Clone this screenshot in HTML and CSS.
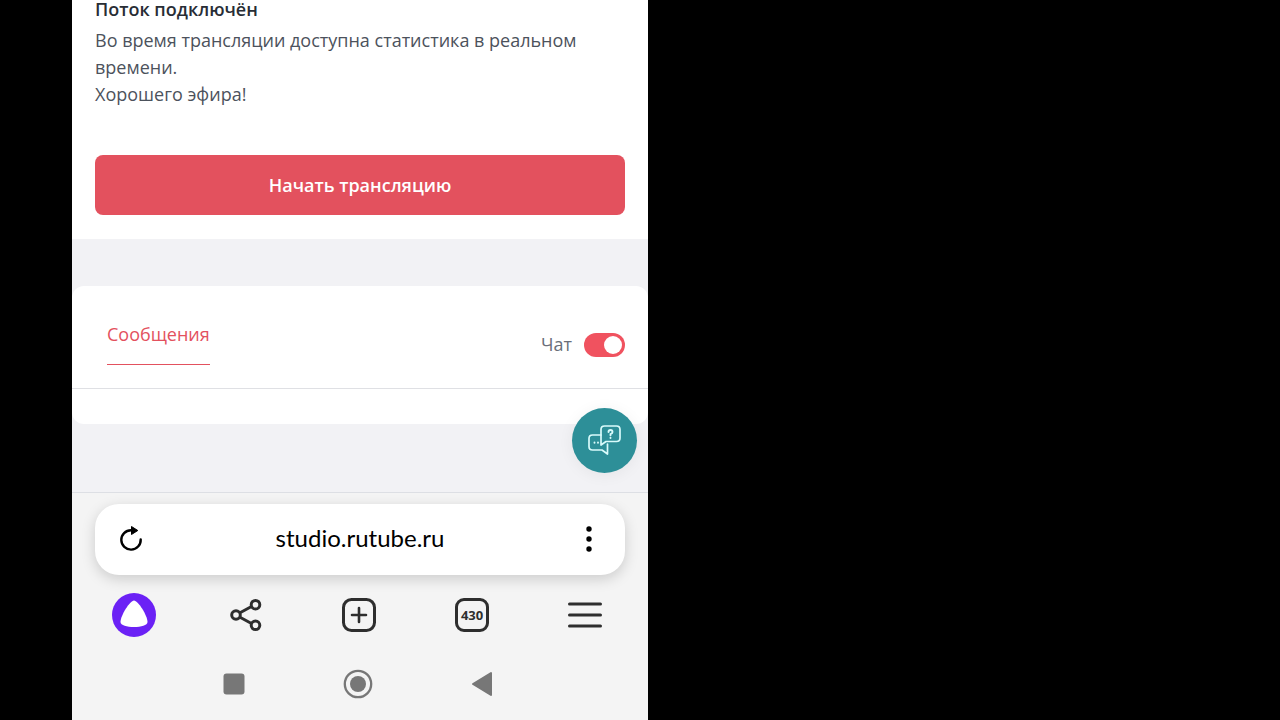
FILE: index.html
```html
<!DOCTYPE html>
<html lang="ru">
<head>
  <meta charset="UTF-8">
  <meta name="viewport" content="width=device-width, initial-scale=1.0">
  <title>Трансляция</title>
  <link rel="stylesheet" href="styles.css">
</head>
<body>
  <div class="phone">
    <main class="page">
      <section class="stream-card">
        <h1 class="stream-title">Поток подключён</h1>
        <p class="stream-text">Во время трансляции доступна статистика в реальном времени.<br>Хорошего эфира!</p>
        <button class="start-button" type="button">Начать трансляцию</button>
      </section>

      <section class="chat-card">
        <div class="chat-header">
          <a class="chat-tab" href="#messages">Сообщения</a>
          <label class="chat-toggle">
            Чат
            <input class="switch" type="checkbox" checked>
          </label>
        </div>
        <div class="chat-body" id="messages"></div>
      </section>

      <button class="help-button" type="button" aria-label="Помощь">
        <svg width="34" height="32" viewBox="0 0 34 32" fill="none" stroke="#d9fbfb" stroke-width="1.7" stroke-linejoin="round" stroke-linecap="round">
          <path d="M13 10H4.500Q1 10 1 13.500V21.500Q1 25 4.500 25H14L19.500 29V19"/>
          <path d="M16.500 1H28.500Q32 1 32 4.500V13Q32 16.500 28.500 16.500H18L13 20V4.500Q13 1 16.500 1Z"/>
          <path d="M20.500 7Q20.500 5 22.500 5Q24.500 5 24.500 7Q24.500 8.200 22.500 9.200V10.200M22.500 12.800V13" stroke-width="1.900"/>
          <path d="M6.500 17.500V17.700M10 17.500V17.700" stroke-width="1.900"/>
        </svg>
      </button>
    </main>

    <footer class="browser">
      <div class="address-bar">
        <button class="icon-button" type="button" aria-label="Обновить">
          <svg width="28" height="30" viewBox="0 0 28 30">
            <path d="M14 5.200A9.700 9.700 0 1 0 23.700 14.500" fill="none" stroke="#000" stroke-width="2.400" stroke-linecap="round"/>
            <path d="M14.500 1.500L20.800 5.500L14.500 9.500Z" fill="#000" stroke="#000" stroke-linejoin="round"/>
          </svg>
        </button>
        <a class="address" href="#">studio.rutube.ru</a>
        <button class="icon-button" type="button" aria-label="Меню страницы">
          <svg width="28" height="30" viewBox="0 0 28 30" fill="#000">
            <circle cx="14" cy="4" r="2.700"/>
            <circle cx="14" cy="14" r="2.700"/>
            <circle cx="14" cy="24" r="2.700"/>
          </svg>
        </button>
      </div>

      <nav class="tool-row">
        <button class="icon-button" type="button" aria-label="Алиса">
          <svg width="44" height="44" viewBox="0 0 44 44">
            <circle cx="22" cy="22" r="22" fill="#6b21f5"/>
            <path d="M22 7.500C26 7.500 35.500 22.500 35.500 29C35.500 32.500 29 34 22 34S8.500 32.500 8.500 29C8.500 22.500 18 7.500 22 7.500Z" fill="#fff"/>
          </svg>
        </button>
        <button class="icon-button" type="button" aria-label="Поделиться">
          <svg width="34" height="36" viewBox="0 0 34 36" fill="none" stroke="#2e2e2e" stroke-width="3">
            <path d="M10 15.800L21.500 9.500M10 20.200L21.500 26.500"/>
            <circle cx="6" cy="18" r="4.300"/>
            <circle cx="25.500" cy="7.700" r="4.300"/>
            <circle cx="25.500" cy="28.300" r="4.300"/>
          </svg>
        </button>
        <button class="icon-button" type="button" aria-label="Новая вкладка">
          <svg width="34" height="34" viewBox="0 0 34 34" fill="none" stroke="#2e2e2e" stroke-width="3" stroke-linecap="round">
            <rect x="1.500" y="1.500" width="31" height="31" rx="8"/>
            <path d="M17 10V24M10 17H24" stroke-width="2.600"/>
          </svg>
        </button>
        <button class="tabs-button" type="button">430</button>
        <button class="icon-button" type="button" aria-label="Меню">
          <svg width="36" height="28" viewBox="0 0 36 28" stroke="#2e2e2e" stroke-width="3" stroke-linecap="round">
            <path d="M2.500 3H33.500M2.500 14H33.500M2.500 25H33.500"/>
          </svg>
        </button>
      </nav>

      <nav class="system-row">
        <button class="icon-button" type="button" aria-label="Недавние">
          <svg width="22" height="22" viewBox="0 0 22 22">
            <rect x="0.500" y="0.500" width="21" height="21" rx="3" fill="#777"/>
          </svg>
        </button>
        <button class="icon-button" type="button" aria-label="Домой">
          <svg width="30" height="30" viewBox="0 0 30 30">
            <circle cx="15" cy="15" r="13.200" fill="none" stroke="#777" stroke-width="2.300"/>
            <circle cx="15" cy="15" r="8" fill="#777"/>
          </svg>
        </button>
        <button class="icon-button" type="button" aria-label="Назад">
          <svg width="22" height="26" viewBox="0 0 22 26">
            <path d="M2 13L20 2V24Z" fill="#777" stroke="#777" stroke-width="2" stroke-linejoin="round"/>
          </svg>
        </button>
      </nav>
    </footer>
  </div>
</body>
</html>
```

FILE: styles.css
```css
* {
  box-sizing: border-box;
}

body {
  margin: 0;
  background-color: #000;
  font-family: "Open Sans", "Noto Sans", sans-serif;
  font-size: 18px;
}

button {
  border: none;
  padding: 0;
  font-family: inherit;
  cursor: pointer;
}

.phone {
  display: flex;
  flex-direction: column;
  width: 45%;
  min-height: 100vh;
  margin-left: 72px;
  background-color: #f2f2f5;
}

/* Page content */
.page {
  position: relative;
  flex: 1;
}

.stream-card {
  padding: 0 23px 24px;
  background-color: #fff;
}

.stream-title {
  margin: 0;
  font-size: 18px;
  font-weight: 600;
  line-height: 19px;
  color: #282d35;
}

.stream-text {
  margin: 8px 0 47px;
  line-height: 27px;
  color: #4c525c;
}

.start-button {
  display: block;
  width: 100%;
  height: 60px;
  border-radius: 8px;
  background-color: #e3515e;
  color: #fff;
  font-size: 18px;
  font-weight: 600;
}

.chat-card {
  margin-top: 47px;
  border-radius: 12px;
  background-color: #fff;
}

.chat-header {
  display: flex;
  justify-content: space-between;
  align-items: center;
  padding: 36px 23px 23px 35px;
  border-bottom: 1px solid #dfe0e4;
}

.chat-tab {
  padding-bottom: 17px;
  border-bottom: 1px solid #e3515e;
  color: #e3515e;
  line-height: 25px;
  text-decoration: none;
}

.chat-toggle {
  display: flex;
  align-items: center;
  gap: 12px;
  color: #6a6f79;
}

.switch {
  appearance: none;
  width: 41px;
  height: 24px;
  margin: 2px 0 0;
  padding: 3px;
  border-radius: 12px;
  background-color: #f0525f;
}

.switch::before {
  content: "";
  display: block;
  width: 18px;
  height: 18px;
  border-radius: 50%;
  background-color: #fff;
}

.switch:checked::before {
  margin-left: auto;
}

.chat-body {
  height: 35px;
}

.help-button {
  position: absolute;
  right: 11px;
  bottom: 19px;
  display: flex;
  align-items: center;
  justify-content: center;
  width: 65px;
  height: 65px;
  border-radius: 50%;
  background-color: #2d8f98;
  box-shadow: 0 2px 16px rgba(0, 0, 0, 0.06);
}

/* Browser controls */
.browser {
  padding-top: 11px;
  border-top: 1px solid #dddfe4;
  background-color: #f4f4f4;
}

.address-bar {
  display: flex;
  align-items: center;
  justify-content: space-between;
  height: 71px;
  margin: 0 23px;
  padding: 0 22px;
  border-radius: 24px;
  background-color: #fff;
  box-shadow: 0 4px 14px rgba(0, 0, 0, 0.17);
}

.address {
  padding-bottom: 4px;
  color: #000;
  font-family: Lato, sans-serif;
  font-size: 24px;
  text-decoration: none;
}

.icon-button {
  display: flex;
  align-items: center;
  justify-content: center;
  background: none;
}

.tool-row {
  display: grid;
  grid-template-columns: repeat(5, 1fr);
  justify-items: center;
  align-items: center;
  height: 80px;
  padding: 0 7px 0 6px;
}

.tabs-button {
  width: 34px;
  height: 34px;
  border: 3px solid #2e2e2e;
  border-radius: 9px;
  background: none;
  color: #2e2e2e;
  font-size: 13px;
  font-weight: 700;
}

.system-row {
  display: flex;
  justify-content: center;
  gap: 98px;
  height: 65px;
  padding: 0 4px 8px 0;
}
```
